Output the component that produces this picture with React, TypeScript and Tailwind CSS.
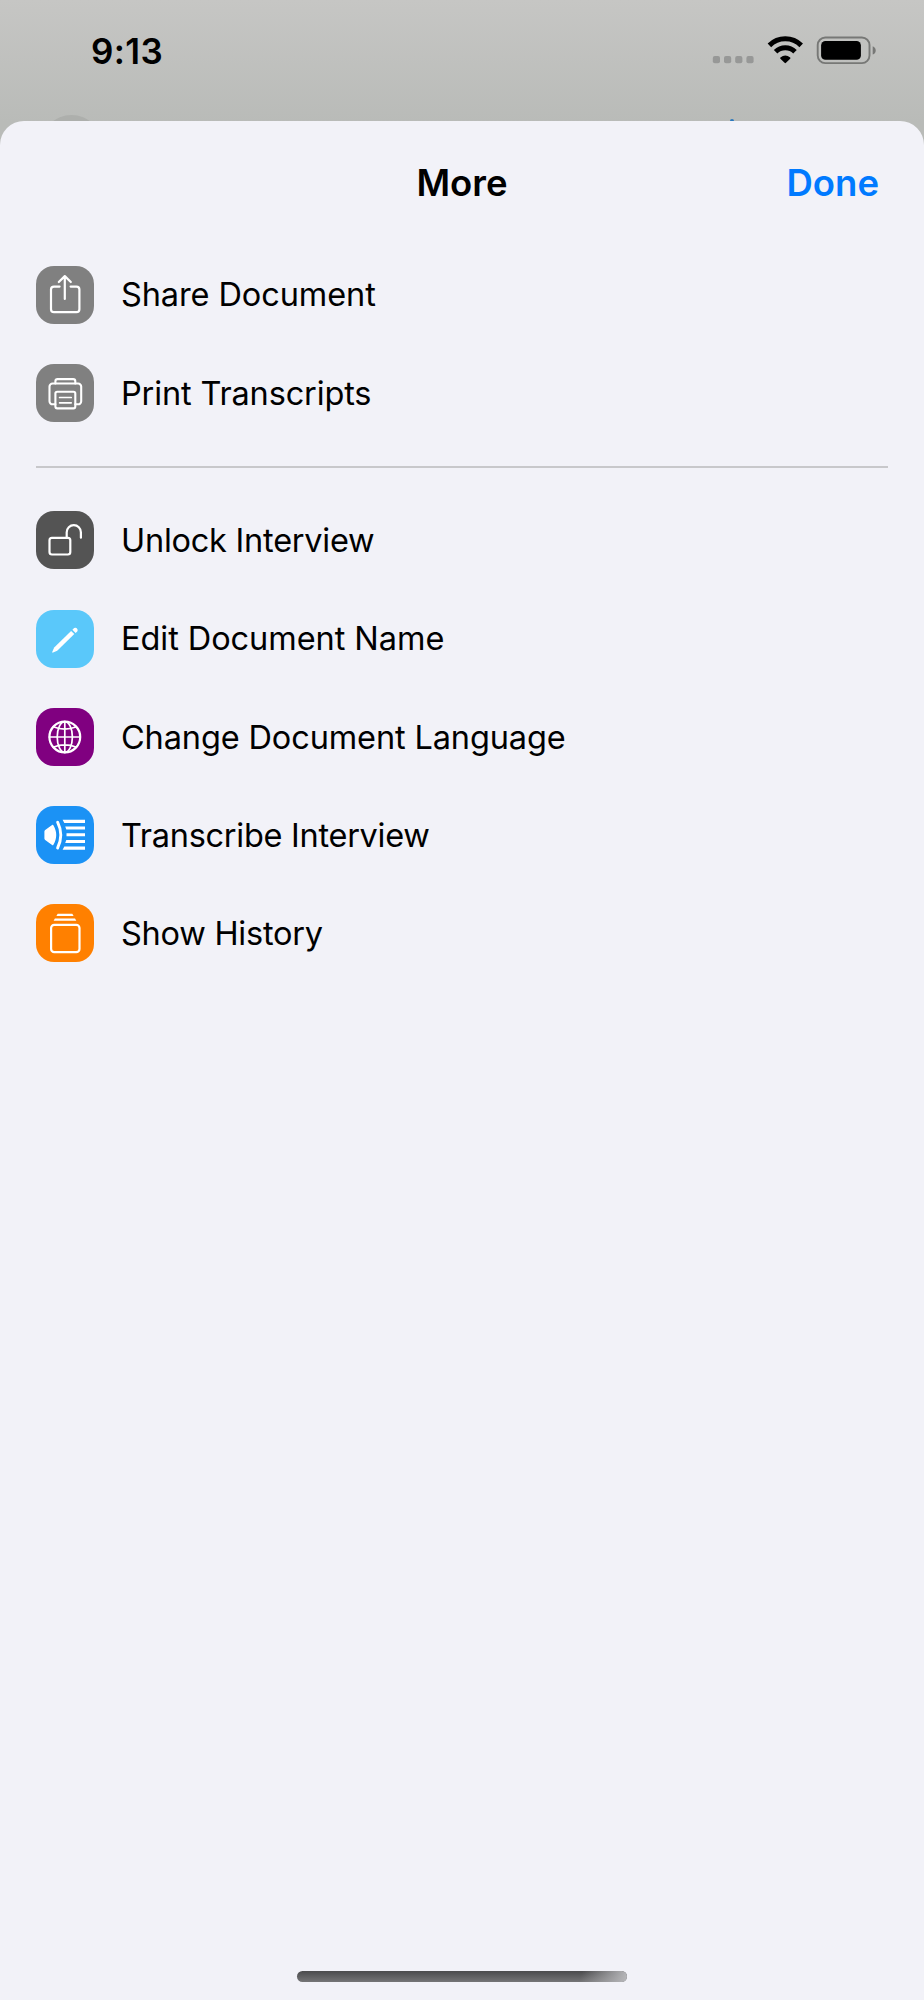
import type { ReactNode } from "react";

type Item = { label: string; tile: string; tracking: string; icon: ReactNode };

const shareIcon = (
  <g strokeWidth="2.2">
    <path d="M23.6 20.6H18a3 3 0 0 0-3 3v19.6a3 3 0 0 0 3 3h22.4a3 3 0 0 0 3-3V23.6a3 3 0 0 0-3-3h-5.8" />
    <path d="M28.8 33V10.2M22.8 16l6-5.9 6 5.9" />
  </g>
);

const printIcon = (
  <g strokeWidth="2.1">
    <path d="M19.4 40.3H16.6a3.1 3.1 0 0 1-3.1-3.1V22.6a3.1 3.1 0 0 1 3.1-3.1h25.5a3.1 3.1 0 0 1 3.1 3.1v14.6a3.1 3.1 0 0 1-3.1 3.1h-2.8" />
    <path d="M19.4 19.5v-2.2a2.2 2.2 0 0 1 2.2-2.2h15.5a2.2 2.2 0 0 1 2.2 2.2v2.2" />
    <rect x="19.4" y="27.8" width="19.9" height="16.6" rx="1.8" />
    <path d="M23.6 33.5h11.6M23.6 38.8h11.6" strokeWidth="1.7" />
  </g>
);

const unlockIcon = (
  <g strokeWidth="2.2">
    <rect x="13.5" y="26.9" width="20.8" height="16.6" rx="2.4" />
    <path d="M30.7 26.5v-5.2a7.1 7.1 0 0 1 14.2 0v5.4" />
  </g>
);

const pencilIcon = (
  <g fill="#fff" stroke="none">
    <path d="M35.1 20.9l3.2 3.2L21.2 40.8l-4.1 1.8c-.7.3-1.1-.1-.8-.8l1.9-4.2z" />
    <path d="M36.4 19.7l1-1a2.45 2.45 0 0 1 3.9.2c.6 1 .4 2-.3 2.8l-1.4 1.2z" />
  </g>
);

const globeIcon = (
  <g strokeWidth="1.7">
    <circle cx="28.8" cy="29" r="15.4" strokeWidth="2.2" />
    <ellipse cx="28.8" cy="29" rx="7.6" ry="15.4" />
    <path d="M28.8 13.6v30.8M13.4 29h30.8M17.2 18.8q11.6 4.7 23.2 0M17.2 39.2q11.6-4.7 23.2 0" />
  </g>
);

const transcribeIcon = (
  <g fill="#fff" stroke="none">
    <path d="M9.2 24.1l6.9-5.2c.5-.4 1-.3 1.3.3 3.8 6.6 3.8 13 0 19.6-.3.6-.8.7-1.3.3l-6.9-5a1.8 1.8 0 0 1-.8-1.5v-7a1.8 1.8 0 0 1 .8-1.5z" />
    <path d="M21.6 16.2q6.4 12.8 0 25.8" fill="none" stroke="#fff" strokeWidth="2.9" />
    <path d="M26.6 13.8H49v3.1H28.3zM29.2 20.5H49v3.1H30.3zM30.5 27.2H49v3.1H30.5zM30.3 33.9H49V37H29.2zM28.3 40.6H49v3.1H26.6z" />
  </g>
);

const historyIcon = (
  <g strokeWidth="2.2">
    <rect x="15.1" y="20.8" width="28.4" height="27.4" rx="3.2" />
    <path d="M21.7 9.7h14.6l1.3 2.2H20.4zM18.9 14.5H39l1.3 2.2H17.6z" fill="#fff" stroke="none" />
  </g>
);

const documentItems: Item[] = [
  { label: "Share Document", tile: "bg-[#808080]", tracking: "tracking-[-0.1px]", icon: shareIcon },
  { label: "Print Transcripts", tile: "bg-[#808080]", tracking: "tracking-[-0.15px]", icon: printIcon },
];

const interviewItems: Item[] = [
  { label: "Unlock Interview", tile: "bg-[#545454]", tracking: "tracking-[-0.24px]", icon: unlockIcon },
  { label: "Edit Document Name", tile: "bg-[#5ac8fa]", tracking: "tracking-[-0.06px]", icon: pencilIcon },
  { label: "Change Document Language", tile: "bg-[#800080]", tracking: "tracking-[-0.13px]", icon: globeIcon },
  { label: "Transcribe Interview", tile: "bg-[#1b92f5]", tracking: "tracking-[-0.28px]", icon: transcribeIcon },
  { label: "Show History", tile: "bg-[#ff8000]", tracking: "tracking-[-0.25px]", icon: historyIcon },
];

function Row({ item }: { item: Item }) {
  return (
    <li className="flex h-[98.3px] items-center">
      <span className={`size-[58px] shrink-0 overflow-hidden rounded-[18px] ${item.tile}`}>
        <svg viewBox="0 0 58 58" className="size-full" fill="none" stroke="#fff" strokeLinecap="round" strokeLinejoin="round">
          {item.icon}
        </svg>
      </span>
      <span className={`ml-[27px] pt-[2px] text-[32.5px] leading-none whitespace-nowrap ${item.tracking}`}>{item.label}</span>
    </li>
  );
}

function StatusBar() {
  return (
    <div className="relative flex h-[121px] items-start justify-between overflow-hidden pr-[47px] pl-[91px]">
      <time className="mt-[33px] text-[35px] leading-9 font-semibold tracking-[0.4px]">9:13</time>
      <svg viewBox="0 0 165 30" className="mt-[35px] h-[30px] w-[165px]" fill="none">
        <g fill="#979897">
          <rect x="0.8" y="21" width="7.2" height="7.2" rx="2" />
          <rect x="12" y="21" width="7.2" height="7.2" rx="2" />
          <rect x="23.2" y="21" width="7.2" height="7.2" rx="2" />
          <rect x="34.4" y="21" width="7.2" height="7.2" rx="2" />
        </g>
        <g stroke="#000" strokeWidth="5">
          <path d="M57.4 10.4a22.6 22.6 0 0 1 31.8 0" />
          <path d="M63.6 16.7a13.8 13.8 0 0 1 19.4 0" />
        </g>
        <path d="M68.4 22.6q4.9-4.2 9.8 0a.8.8 0 0 1 0 1.1l-4.2 4.1a1 1 0 0 1-1.4 0l-4.2-4.1a.8.8 0 0 1 0-1.1z" fill="#000" />
        <rect x="105.7" y="2.5" width="51.8" height="25.6" rx="7.6" stroke="#777876" strokeWidth="1.9" />
        <rect x="109.1" y="6" width="39.8" height="18.8" rx="4.4" fill="#000" />
        <path d="M160.7 11.2q3 1.2 3 4.2t-3 4.2z" fill="#777876" />
      </svg>
      <div className="absolute top-[115px] left-[41px] size-[61px] rounded-full bg-[#adafac]" />
      <div className="absolute top-[119px] left-[730px] h-1 w-1 rounded-full bg-[#2a78bd]" />
    </div>
  );
}

export default function App() {
  return (
    <div className="flex h-[2000px] w-[924px] flex-col overflow-hidden bg-[linear-gradient(to_bottom,#c6c6c4_0px,#b9bbb8_122px,#b9bbb8_100%)] font-['Inter',sans-serif] text-black">
      <StatusBar />
      <main className="flex flex-1 flex-col rounded-t-[24px] bg-[#f2f2f8]">
        <header className="grid h-[124.5px] grid-cols-3 items-start px-[45px] pt-[42px] text-[36.5px] leading-10 font-semibold">
          <h1 className="col-start-2 text-center">More</h1>
          <button className="justify-self-end text-[#007aff]">Done</button>
        </header>
        <nav className="px-9">
          <ul>
            {documentItems.map((item) => (
              <Row key={item.label} item={item} />
            ))}
          </ul>
          <div className="flex h-[49px] items-center">
            <hr className="w-full border-t-2 border-[#c8c8cb]" />
          </div>
          <ul>
            {interviewItems.map((item) => (
              <Row key={item.label} item={item} />
            ))}
          </ul>
        </nav>
        <div className="mx-auto mt-auto mb-[18px] h-[11px] w-[330px] overflow-hidden rounded-full bg-linear-to-b from-[#4b4b4d] to-[#757577]">
          <div className="ml-auto h-full w-[50px] bg-[linear-gradient(105deg,transparent_10%,#b4b4b7_95%)]" />
        </div>
      </main>
    </div>
  );
}
